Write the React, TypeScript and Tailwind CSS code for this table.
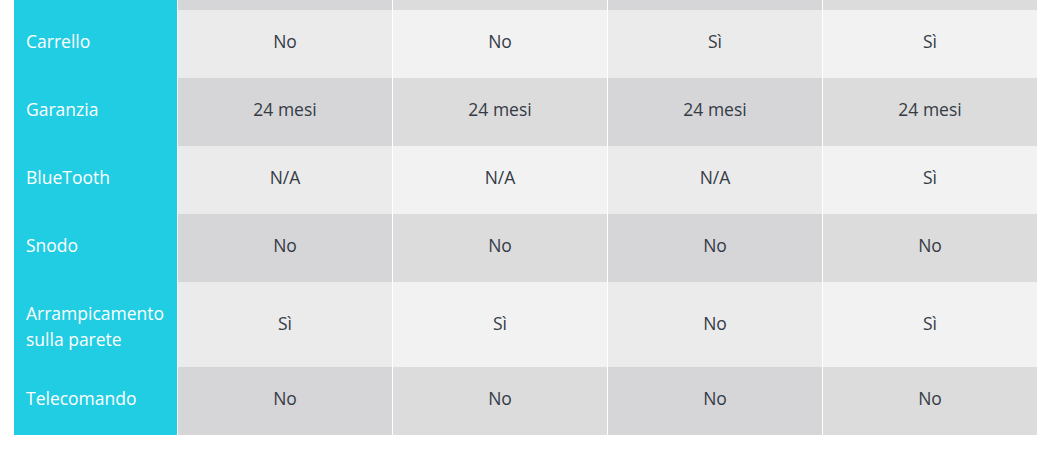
const rows: { label: string[]; values: string[]; tall?: boolean }[] = [
  { label: ["Carrello"], values: ["No", "No", "Sì", "Sì"] },
  { label: ["Garanzia"], values: ["24 mesi", "24 mesi", "24 mesi", "24 mesi"] },
  { label: ["BlueTooth"], values: ["N/A", "N/A", "N/A", "Sì"] },
  { label: ["Snodo"], values: ["No", "No", "No", "No"] },
  { label: ["Arrampicamento", "sulla parete"], values: ["Sì", "Sì", "No", "Sì"], tall: true },
  { label: ["Telecomando"], values: ["No", "No", "No", "No"] },
];

// row 0 is the partially scrolled-off row at the top (dark)
const cellBg = (rowIdx: number, colIdx: number) => {
  const dark = rowIdx % 2 === 0;
  const odd = colIdx % 2 === 0;
  if (dark) return odd ? "bg-[#d6d6d8]" : "bg-[#dcdcdc]";
  return odd ? "bg-[#ebebeb]" : "bg-[#f2f2f2]";
};

export default function App() {
  return (
    <div className="w-[1062px] h-[466px] bg-white overflow-hidden" style={{ fontFamily: '"Open Sans", sans-serif' }}>
      <div className="ml-[14px] w-[1023px] grid grid-cols-[163px_214px_214px_214px_214px] gap-x-px bg-white">
        {/* partial top row */}
        <div className="h-[10px] bg-[#21cde3]" />
        {[0, 1, 2, 3].map((c) => (
          <div key={c} className={`h-[10px] ${cellBg(0, c)}`} />
        ))}

        {rows.map((row, i) => (
          <div key={row.label[0]} className="contents">
            <div
              className={`bg-[#21cde3] text-white text-[17.5px] leading-[26px] pl-3 flex flex-col justify-center ${
                row.tall ? "h-[85px] pt-[2px]" : "h-[68px] pb-[6px]"
              }`}
            >
              {row.label.map((l) => (
                <span key={l}>{l}</span>
              ))}
            </div>
            {row.values.map((v, c) => (
              <div
                key={c}
                className={`${cellBg(i + 1, c)} flex items-center justify-center text-[17.5px] text-[#343b45] ${
                  row.tall ? "h-[85px] pb-[3px]" : "h-[68px] pb-[6px]"
                }`}
              >
                {v}
              </div>
            ))}
          </div>
        ))}
      </div>
    </div>
  );
}
